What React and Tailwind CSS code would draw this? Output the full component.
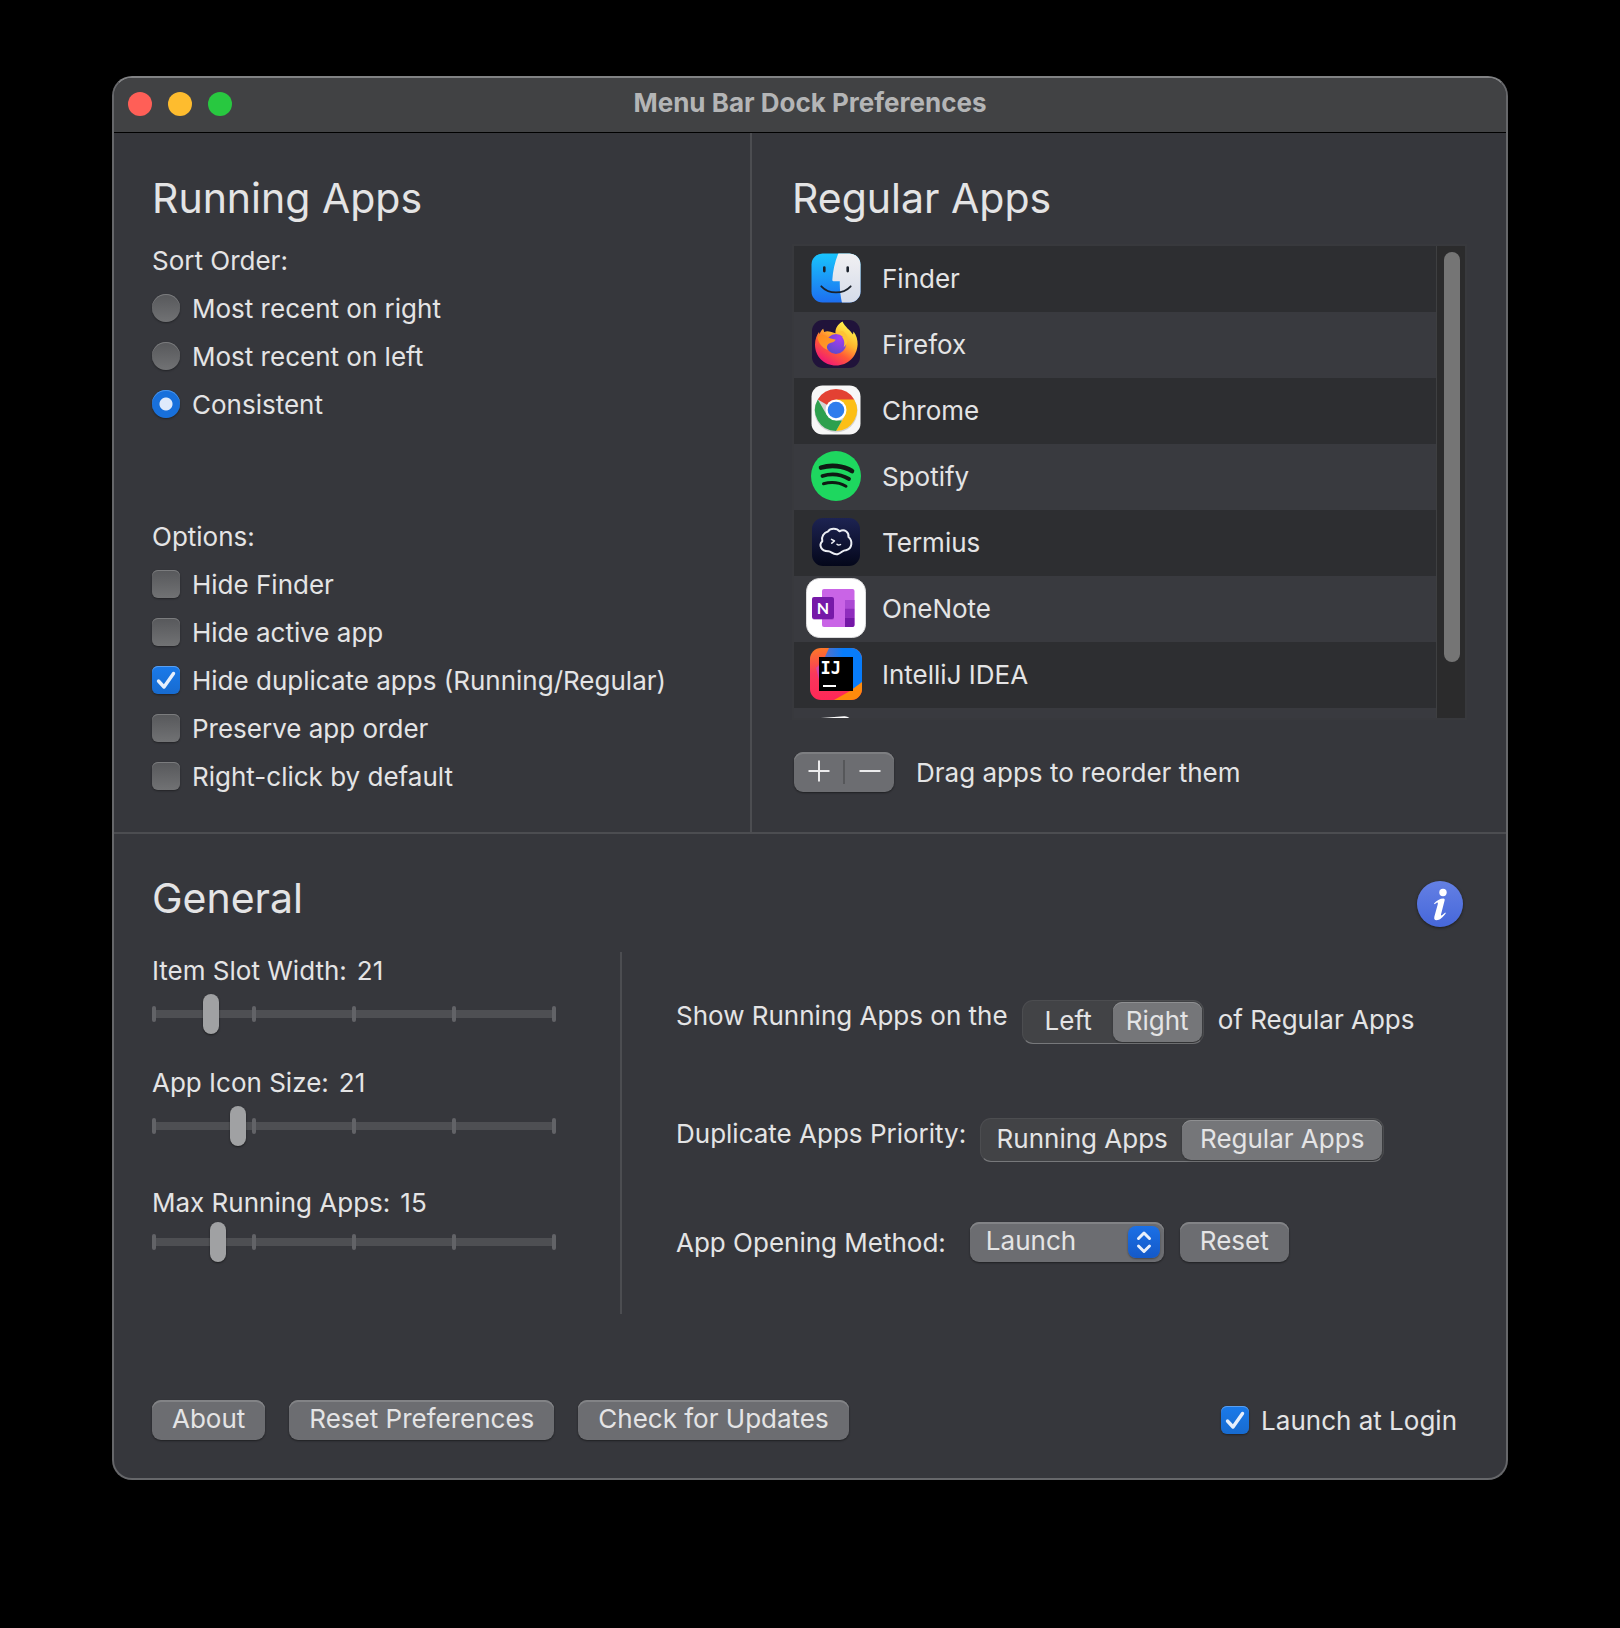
import { useState } from 'react'
import clsx from 'clsx'

const SORT_ORDERS = ['Most recent on right', 'Most recent on left', 'Consistent']

const OPTIONS = [
  { id: 'hideFinder', label: 'Hide Finder' },
  { id: 'hideActive', label: 'Hide active app' },
  { id: 'hideDuplicates', label: 'Hide duplicate apps (Running/Regular)' },
  { id: 'preserveOrder', label: 'Preserve app order' },
  { id: 'rightClick', label: 'Right-click by default' }
]

const iconClass = 'shrink-0 w-15 h-15 mb-[2px]'

function FinderIcon() {
  return (
    <svg viewBox="0 0 60 60" className={iconClass}>
      <defs>
        <linearGradient id="finderBlue" x1="0" y1="0" x2="0" y2="1">
          <stop offset="0" stopColor="#19c5fd" />
          <stop offset="1" stopColor="#1d6df0" />
        </linearGradient>
        <linearGradient id="finderWhite" x1="0" y1="0" x2="0" y2="1">
          <stop offset="0" stopColor="#f1f0f2" />
          <stop offset="1" stopColor="#d5dcea" />
        </linearGradient>
        <clipPath id="finderClip">
          <rect x="5.5" y="5.5" width="49" height="49" rx="11" />
        </clipPath>
      </defs>
      <g clipPath="url(#finderClip)">
        <rect x="5" y="5" width="50" height="50" fill="url(#finderBlue)" />
        <path d="M32.5 5C29 13 26.8 23 26.3 32Q26.300 33.300 27.500 33.300H33.800C33.600 41 34.500 48 36 55H55V5Z" fill="url(#finderWhite)" />
      </g>
      <path d="M18.300 19.500v3.600M41.700 19.500v3.600" stroke="#1b222c" strokeWidth="2.600" strokeLinecap="round" />
      <path d="M15.300 38.300C23 46.500 37 46.500 44.700 38.300" fill="none" stroke="#1b222c" strokeWidth="1.800" strokeLinecap="round" />
    </svg>
  )
}

function FirefoxIcon() {
  return (
    <svg viewBox="0 0 60 60" className={iconClass}>
      <defs>
        <linearGradient id="foxBody" x1="0.8" y1="0.1" x2="0.25" y2="1">
          <stop offset="0" stopColor="#fff04a" />
          <stop offset="0.35" stopColor="#ffb22e" />
          <stop offset="0.62" stopColor="#ff5a36" />
          <stop offset="1" stopColor="#f0117c" />
        </linearGradient>
        <linearGradient id="foxHead" x1="0" y1="0" x2="1" y2="1">
          <stop offset="0" stopColor="#ff8a1e" />
          <stop offset="1" stopColor="#ff9f2b" />
        </linearGradient>
        <radialGradient id="foxGlobe" cx="0.7" cy="0.2" r="0.9">
          <stop offset="0" stopColor="#a63df2" />
          <stop offset="1" stopColor="#5a4bc8" />
        </radialGradient>
      </defs>
      <rect x="6" y="6" width="48" height="48" rx="11" fill="#20133a" />
      <path d="M36.5 7.5C39 13 44 16 47 20.5L47.5 17.5C50.5 21.5 51.8 26 51.6 30.5C51 42.5 42 51.5 30 51.5C18 51.5 9 42.5 9 30.5C9 25.5 10.8 21 13 18L13.6 20.2C14.5 17.5 16 15.5 17.2 14.8L18.2 18C20.5 16.8 22.5 17 24.5 17.8L29.5 19.3C29 14.5 32 10 36.5 7.5Z" fill="url(#foxBody)" />
      <circle cx="30" cy="30" r="10" fill="url(#foxGlobe)" />
      <path d="M31 19.8C34 19 37 20.300 39 23L35.800 22.700C38.500 25.500 39 30 37.500 33.500C43 28.500 43 21.500 37.500 17.500C35 16.500 32.500 17.500 31 19.800Z" fill="#ffc335" />
      <path d="M11.5 23C14.5 19.5 19.5 20.5 22 23.5C24.5 24.8 27.5 25 29.6 25.6C28.7 28.5 25.3 28.6 23 29.6C20.7 30.8 20.5 33.5 21.5 36C16.5 34 12 29 11.5 23Z" fill="url(#foxHead)" />
    </svg>
  )
}

function ChromeIcon() {
  return (
    <svg viewBox="0 0 60 60" className={iconClass}>
      <rect x="5.5" y="5.5" width="49" height="49" rx="11" fill="#f7f7f7" />
      <circle cx="30" cy="31" r="21.5" fill="#d4d4d4" />
      <path d="M30 30L11.8 19.5A21 21 0 0 1 48.2 19.5Z" fill="#e34133" />
      <path d="M30 19.5H48.2A21 21 0 0 1 30 51L39.1 35.2Z" fill="#fcbf16" />
      <path d="M11.8 19.5L20.9 35.2L30 40.5H36L30 51A21 21 0 0 1 11.8 19.5Z" fill="#2da04e" />
      <circle cx="30" cy="30" r="10.5" fill="#fff" />
      <circle cx="30" cy="30" r="8.3" fill="#2f7ded" />
    </svg>
  )
}

function SpotifyIcon() {
  return (
    <svg viewBox="0 0 60 60" className={iconClass}>
      <circle cx="30" cy="30" r="25" fill="#1ed75f" />
      <g fill="none" stroke="#0f1a13" strokeLinecap="round">
        <path d="M15 21.6C25 18.6 37 19.6 46 25" strokeWidth="4.6" />
        <path d="M16.5 30C25 27.4 35 28.4 43 33" strokeWidth="3.8" />
        <path d="M17.5 37.8C25 35.8 33.5 36.6 40 40.3" strokeWidth="3" />
      </g>
    </svg>
  )
}

function TermiusIcon() {
  return (
    <svg viewBox="0 0 60 60" className={iconClass}>
      <defs>
        <linearGradient id="termiusBg" x1="0" y1="0" x2="0" y2="1">
          <stop offset="0" stopColor="#1d2352" />
          <stop offset="1" stopColor="#04071a" />
        </linearGradient>
      </defs>
      <rect x="6" y="6" width="48" height="48" rx="11" fill="url(#termiusBg)" />
      <g fill="none" stroke="#eceef4" strokeLinecap="round" strokeLinejoin="round">
        <path d="M22 19.500C24.500 15.500 31 16 33.500 19.300C38.500 16.500 43 20 42.500 25C46.800 28.500 46.500 37 40 38.200C36.500 38 36 41 31.500 42.200C27 43.200 25.500 39.400 22.500 39.300C15 39.500 12.500 33 16.300 29.300C15 24.500 18 20.500 22 19.500Z" strokeWidth="2" />
        <path d="M25.500 27.300L28.500 29L25.800 31.200M31 32.200C32 33.200 33 33.200 34.500 32.600" strokeWidth="1.500" />
      </g>
    </svg>
  )
}

function OneNoteIcon() {
  return (
    <svg viewBox="0 0 60 60" className={iconClass}>
      <rect x="0.5" y="0.5" width="59" height="59" rx="13" fill="#fff" stroke="#dcdcde" />
      <rect x="16" y="11" width="32.5" height="38" rx="2" fill="#c964e6" />
      <path d="M39 22h9.500v8.500h-9.500z" fill="#ab49d3" />
      <path d="M39 30.500h9.500v9h-9.500z" fill="#8f2cbd" />
      <path d="M39 39.500h9.500V47a2 2 0 0 1-2 2H39z" fill="#7417a6" />
      <rect x="6.500" y="20" width="21.500" height="22" rx="2" fill="#7c2ea3" opacity="0.35" />
      <rect x="6" y="19" width="22" height="22" rx="2" fill="#7619a8" />
      <text x="17" y="35.500" textAnchor="middle" fill="#fff" fontSize="16" fontWeight="700" fontFamily="Lato, sans-serif">N</text>
    </svg>
  )
}

function IntelliJIcon() {
  return (
    <svg viewBox="0 0 60 60" className={iconClass}>
      <defs>
        <linearGradient id="ijPink" x1="0" y1="0" x2="0.1" y2="1">
          <stop offset="0" stopColor="#fc7a26" />
          <stop offset="0.5" stopColor="#f9385c" />
          <stop offset="1" stopColor="#fe2857" />
        </linearGradient>
        <linearGradient id="ijBlue" x1="0" y1="0" x2="1" y2="0">
          <stop offset="0" stopColor="#5a6fc4" />
          <stop offset="0.5" stopColor="#087cfa" />
        </linearGradient>
        <clipPath id="ijClip">
          <rect x="4" y="4" width="52" height="52" rx="11" />
        </clipPath>
      </defs>
      <g clipPath="url(#ijClip)">
        <rect x="4" y="4" width="52" height="52" fill="url(#ijPink)" />
        <path d="M23 4L18 15L30 40L44 47L56 40V4Z" fill="url(#ijBlue)" />
        <path d="M10 24L14 20V40Z" fill="#b74af7" opacity="0.5" />
        <path d="M56 38L44 47L28 56H56Z" fill="#fe8a0c" />
      </g>
      <rect x="13" y="13" width="34" height="34" fill="#000" />
      <text x="14.500" y="29.500" fill="#fff" fontSize="17" fontWeight="700" fontFamily="DejaVu Sans Mono, monospace">IJ</text>
      <rect x="17" y="41" width="13" height="2" fill="#fff" />
    </svg>
  )
}

function NotionIcon() {
  return (
    <svg viewBox="0 0 60 60" className={iconClass}>
      <path d="M8 8.500L38 6.300Q41 6 43.500 8L52 15V52L10 54L6 47V11Z" fill="#fff" />
      <path d="M14 9.500L38 7.900Q40 7.800 41.500 9L44 11.500L19 13Z" fill="#3a3b3f" />
    </svg>
  )
}

const APPS = [
  { name: 'Finder', Icon: FinderIcon },
  { name: 'Firefox', Icon: FirefoxIcon },
  { name: 'Chrome', Icon: ChromeIcon },
  { name: 'Spotify', Icon: SpotifyIcon },
  { name: 'Termius', Icon: TermiusIcon },
  { name: 'OneNote', Icon: OneNoteIcon },
  { name: 'IntelliJ IDEA', Icon: IntelliJIcon },
  { name: '', Icon: NotionIcon }
]

function Radio({ label, checked, onChange }) {
  return (
    <label className="flex items-center gap-3 h-7">
      <input
        type="radio"
        name="sortOrder"
        checked={checked}
        onChange={onChange}
        className="appearance-none shrink-0 w-7 h-7 rounded-full bg-linear-to-b from-[#57585b] to-[#717274] shadow-[inset_0_1px_0_#7b7c7e,0_1px_2px_#00000060] checked:bg-[radial-gradient(circle,#dfeafb_0_6px,#1870db_7px)] checked:shadow-[inset_0_1px_0_#4a95ec,0_1px_2px_#00000060]"
      />
      <span className="pt-[2px]">{label}</span>
    </label>
  )
}

function Checkbox({ label, checked, onChange }) {
  return (
    <label className="flex items-center gap-3 h-7">
      <span className="grid shrink-0">
        <input
          type="checkbox"
          checked={checked}
          onChange={onChange}
          className="peer [grid-area:1/1] appearance-none w-7 h-7 rounded-md bg-linear-to-b from-[#57585b] to-[#717274] shadow-[inset_0_1px_0_#7b7c7e,0_1px_2px_#00000060] checked:from-[#1a7aea] checked:to-[#176bd0] checked:shadow-[inset_0_1px_0_#5a9ff0,0_1px_2px_#00000060]"
        />
        <svg viewBox="0 0 28 28" className="hidden peer-checked:block [grid-area:1/1] w-7 h-7 pointer-events-none">
          <path d="M6.500 15L12 21L21.500 7.500" fill="none" stroke="#e6effc" strokeWidth="3.400" strokeLinecap="round" strokeLinejoin="round" />
        </svg>
      </span>
      <span className="pt-[2px]">{label}</span>
    </label>
  )
}

function Slider({ id, label, value, min, max, onChange, tight }) {
  return (
    <div>
      <label htmlFor={id} className="flex gap-[10px] leading-8">
        <span>{label}</span>
        <span>{value}</span>
      </label>
      <div className={clsx('grid items-center', tight ? 'mt-[3px]' : 'mt-[7px]')}>
        <div className="[grid-area:1/1] h-2 bg-[#4e4f53]" />
        <div className="[grid-area:1/1] flex justify-between">
          {[0, 1, 2, 3, 4].map(tick => (
            <span key={tick} className="w-1 h-4 rounded-sm bg-[#626367]" />
          ))}
        </div>
        <input
          id={id}
          type="range"
          min={min}
          max={max}
          value={value}
          onChange={(e) => onChange(Number(e.target.value))}
          className="[grid-area:1/1] w-full h-10 m-0 appearance-none bg-transparent [&::-webkit-slider-thumb]:appearance-none [&::-webkit-slider-thumb]:w-4 [&::-webkit-slider-thumb]:h-10 [&::-webkit-slider-thumb]:rounded-full [&::-webkit-slider-thumb]:bg-[#a0a1a3] [&::-webkit-slider-thumb]:shadow-[0_1px_2px_#00000080]"
        />
      </div>
    </div>
  )
}

function Segmented({ label, options, value, onChange, itemClass }) {
  return (
    <div
      role="group"
      aria-label={label}
      className="flex h-11 p-px rounded-[11px] bg-[#424346] border border-[#4c4d50] border-b-[#77787b]"
    >
      {options.map(option => (
        <button
          key={option}
          type="button"
          aria-pressed={value === option}
          onClick={() => onChange(option)}
          className={clsx(
            'h-10 pb-[2px] rounded-[9px] whitespace-nowrap',
            itemClass,
            value === option && 'bg-[#757679] shadow-[inset_0_1px_0_#8e8f91,0_1px_2px_#00000050]'
          )}
        >
          {option}
        </button>
      ))}
    </div>
  )
}

function PushButton({ children }) {
  return (
    <button
      type="button"
      className="h-10 px-5 pb-[2px] rounded-[9px] bg-[#6c6d71] whitespace-nowrap shadow-[inset_0_2px_0_#828386,0_1px_2px_#00000070]"
    >
      {children}
    </button>
  )
}

export default function App() {
  const [sortOrder, setSortOrder] = useState('Consistent')
  const [options, setOptions] = useState({ hideDuplicates: true })
  const [slotWidth, setSlotWidth] = useState(21)
  const [iconSize, setIconSize] = useState(21)
  const [maxApps, setMaxApps] = useState(15)
  const [side, setSide] = useState('Right')
  const [priority, setPriority] = useState('Regular Apps')
  const [method, setMethod] = useState('Launch')
  const [launchAtLogin, setLaunchAtLogin] = useState(true)

  const toggleOption = (id) => setOptions({ ...options, [id]: !options[id] })

  return (
    <div className="min-h-screen bg-black px-28 pt-19 pb-37 font-['Inter',sans-serif] text-[26px] leading-8 text-[#e4e4e5]">
      <div className="rounded-[20px] border-2 border-[#66676a] border-t-[#818284] bg-[#36373c] overflow-hidden">
        {/* Title bar */}
        <header className="grid grid-cols-[1fr_auto_1fr] items-center h-[55px] px-[14px] pb-[2px] bg-[#414244] border-b border-black">
          <div className="flex gap-4">
            <button type="button" aria-label="Close" className="w-6 h-6 rounded-full bg-[#ff5f57]" />
            <button type="button" aria-label="Minimize" className="w-6 h-6 rounded-full bg-[#febc2e]" />
            <button type="button" aria-label="Zoom" className="w-6 h-6 rounded-full bg-[#28c840]" />
          </div>
          <h1 className="pb-[2px] font-bold text-[#b4b5b6]">Menu Bar Dock Preferences</h1>
        </header>

        <div className="grid grid-cols-[638fr_754fr] border-b-2 border-[#4c4d51]">
          {/* Running apps */}
          <section className="pt-[41px] pb-[42px] pl-[38px] border-r-2 border-[#4c4d51]">
            <h2 className="text-[41px] leading-12">Running Apps</h2>
            <p className="mt-[23px]">Sort Order:</p>
            <div className="mt-[17px] flex flex-col gap-5">
              {SORT_ORDERS.map(order => (
                <Radio key={order} label={order} checked={sortOrder === order} onChange={() => setSortOrder(order)} />
              ))}
            </div>
            <p className="mt-[103px]">Options:</p>
            <div className="mt-[17px] flex flex-col gap-5">
              {OPTIONS.map(option => (
                <Checkbox
                  key={option.id}
                  label={option.label}
                  checked={!!options[option.id]}
                  onChange={() => toggleOption(option.id)}
                />
              ))}
            </div>
          </section>

          {/* Regular apps */}
          <section className="pt-[41px] pl-10 pr-[39px]">
            <h2 className="text-[41px] leading-12">Regular Apps</h2>
            <div className="mt-[22px] flex h-[476px] border-2 border-[#38393d] overflow-hidden">
              <ul className="flex-1">
                {APPS.map(({ name, Icon }, index) => (
                  <li
                    key={index}
                    className={clsx('flex items-center gap-4 h-[66px] pl-3', index % 2 ? 'bg-[#393a3f]' : 'bg-[#2d2e31]')}
                  >
                    <Icon />
                    {name}
                  </li>
                ))}
              </ul>
              <div className="w-[29px] pt-[6px] pl-[7px] bg-[#2b2b2c] border-l border-[#3e3f41]">
                <div className="w-4 h-[410px] rounded-full bg-[#757575]" />
              </div>
            </div>
            <div className="mt-8 flex items-center gap-[22px] pl-[2px]">
              <div className="flex items-center w-25 h-10 rounded-[9px] bg-[#6c6d71] shadow-[inset_0_2px_0_#7d7e81,0_1px_2px_#00000070]">
                <button type="button" aria-label="Add app" className="flex-1 flex justify-center">
                  <svg viewBox="0 0 24 24" className="w-6 h-6">
                    <path d="M1.500 11H22.500M12 0.500V21.500" stroke="#ececed" strokeWidth="2" />
                  </svg>
                </button>
                <span className="w-[2px] h-6 bg-[#56575a]" />
                <button type="button" aria-label="Remove app" className="flex-1 flex justify-center">
                  <svg viewBox="0 0 24 24" className="w-6 h-6">
                    <path d="M1.500 11H22.500" stroke="#ececed" strokeWidth="2" />
                  </svg>
                </button>
              </div>
              <p className="pt-[2px]">Drag apps to reorder them</p>
            </div>
          </section>
        </div>

        {/* General */}
        <section className="pt-10 pb-[38px] pl-[38px] pr-[43px]">
          <div className="flex items-start justify-between">
            <h2 className="text-[41px] leading-12">General</h2>
            <button
              type="button"
              aria-label="Info"
              className="mt-[7px] flex items-center justify-center w-[46px] h-[46px] rounded-full bg-linear-to-b from-[#6480e4] to-[#4667da] shadow-[0_1px_3px_#00000080]"
            >
              <svg viewBox="0 0 46 46" className="w-[46px] h-[46px]">
                <circle cx="26" cy="11.500" r="3.700" fill="#fff" />
                <path d="M17 22.500C19.500 19.500 23 17.500 26.500 17.500C27.500 17.500 27.900 18.300 27.600 19.500L24 33.500C23.700 35 24.500 35 28.300 31.500L28.800 32.300C26 36.500 22.500 39.300 19.500 39.300C17.500 39.300 16.800 38 17.400 35.500L20.700 23.500C21.300 21 20.500 20.800 17.700 23.200Z" fill="#fff" />
              </svg>
            </button>
          </div>

          <div className="mt-[25px] flex">
            <div className="w-[470px] h-[362px] pt-[3px] pr-16 border-r-2 border-[#4c4d51]">
              <Slider id="slotWidth" label="Item Slot Width:" value={slotWidth} min={15} max={61} onChange={setSlotWidth} />
              <div className="mt-[33px]">
                <Slider id="iconSize" label="App Icon Size:" value={iconSize} min={13} max={53} onChange={setIconSize} />
              </div>
              <div className="mt-[41px]">
                <Slider id="maxApps" label="Max Running Apps:" value={maxApps} min={1} max={95} onChange={setMaxApps} tight />
              </div>
            </div>

            <div className="flex-1 pt-12 pl-[54px]">
              <div className="flex items-start gap-[14px]">
                <p>Show Running Apps on the</p>
                <Segmented label="Running apps side" options={['Left', 'Right']} value={side} onChange={setSide} itemClass="w-[89px]" />
                <p className="pt-1">of Regular Apps</p>
              </div>
              <div className="mt-[74px] flex items-start gap-[14px]">
                <p>Duplicate Apps Priority:</p>
                <Segmented
                  label="Duplicate apps priority"
                  options={['Running Apps', 'Regular Apps']}
                  value={priority}
                  onChange={setPriority}
                  itemClass="w-[200px]"
                />
              </div>
              <div className="mt-15 flex items-center">
                <label htmlFor="method" className="mr-6 pt-[2px]">App Opening Method:</label>
                <span className="grid items-center w-[194px]">
                  <select
                    id="method"
                    value={method}
                    onChange={(e) => setMethod(e.target.value)}
                    className="[grid-area:1/1] appearance-none h-10 pl-4 pb-[2px] rounded-[9px] bg-[#6c6d71] shadow-[inset_0_2px_0_#828386,0_1px_2px_#00000070]"
                  >
                    <option>Launch</option>
                    <option>Activate</option>
                  </select>
                  <span className="[grid-area:1/1] justify-self-end mr-1 w-8 h-8 rounded-lg bg-linear-to-b from-[#1b70e6] to-[#1459c8] pointer-events-none shadow-[0_1px_2px_#00000060]">
                    <svg viewBox="0 0 32 32" className="w-8 h-8">
                      <path d="M10.500 12.500L16 7L21.500 12.500M10.500 20L16 25.500L21.500 20" fill="none" stroke="#e8f0fc" strokeWidth="3" strokeLinecap="round" strokeLinejoin="round" />
                    </svg>
                  </span>
                </span>
                <span className="ml-4 flex">
                  <PushButton>Reset</PushButton>
                </span>
              </div>
            </div>
          </div>

          <footer className="mt-[86px] pr-[6px] flex items-center justify-between">
            <div className="flex gap-6">
              <PushButton>About</PushButton>
              <PushButton>Reset Preferences</PushButton>
              <PushButton>Check for Updates</PushButton>
            </div>
            <Checkbox label="Launch at Login" checked={launchAtLogin} onChange={() => setLaunchAtLogin(!launchAtLogin)} />
          </footer>
        </section>
      </div>
    </div>
  )
}
